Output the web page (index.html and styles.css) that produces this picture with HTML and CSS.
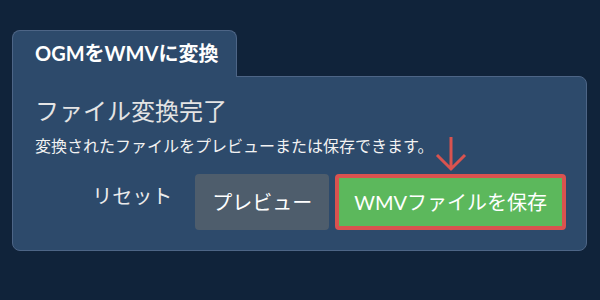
FILE: index.html
```html
<!DOCTYPE html>
<html lang="ja">
<head>
    <meta charset="UTF-8">
    <meta name="viewport" content="width=device-width, initial-scale=1.0">
    <title>OGMをWMVに変換</title>
    <link rel="stylesheet" href="styles.css">
</head>
<body>
    <div class="converter">
        <div class="tab">OGMをWMVに変換</div>
        <div class="panel">
            <h2 class="panel-title">ファイル変換完了</h2>
            <p class="panel-text">変換されたファイルをプレビューまたは保存できます。</p>
            <div class="actions">
                <button class="btn btn-link">リセット</button>
                <button class="btn btn-secondary">プレビュー</button>
                <div class="save-wrap">
                    <svg class="hint-arrow" width="32" height="36" viewBox="0 0 32 36">
                        <path d="M16 1 V33 M2 19 L16 33 L30 19" fill="none" stroke="#d9534f" stroke-width="3" />
                    </svg>
                    <button class="btn btn-success">WMVファイルを保存</button>
                </div>
            </div>
        </div>
    </div>
</body>
</html>
```

FILE: styles.css
```css
body {
    margin: 0;
    background-color: #10233a;
    font-family: Lato, "Noto Sans CJK JP", sans-serif;
    color: #ebebeb;
}
.converter {
    width: 575px;
    padding: 30px 0 0 12px;
}
.tab {
    position: relative;
    z-index: 1;
    display: inline-block;
    box-sizing: border-box;
    height: 47px;
    margin-bottom: -1px;
    padding: 0 18px 0 22px;
    background-color: #2d4a6b;
    border: 1px solid #4d6586;
    border-bottom: none;
    border-radius: 8px 8px 0 0;
    color: #fff;
    font-size: 20px;
    font-weight: bold;
    line-height: 45px;
}
.panel {
    box-sizing: border-box;
    height: 175px;
    padding: 18px 20px 0 22px;
    background-color: #2d4a6b;
    border: 1px solid #4d6586;
    border-radius: 0 8px 8px 8px;
}
.panel-title {
    margin: 0;
    font-size: 24px;
    font-weight: normal;
    line-height: 32px;
    color: #e4e4e4;
}
.panel-text {
    margin: 7px 0 0;
    font-size: 16px;
    line-height: 24px;
    color: #f2f2f2;
}
.actions {
    display: flex;
    justify-content: flex-end;
    align-items: center;
    gap: 6px;
    margin-top: 16px;
}
.btn {
    padding: 14px 17px;
    border: none;
    border-radius: 4px;
    font-family: Lato, "Noto Sans CJK JP", sans-serif;
    font-size: 20px;
    line-height: 28px;
    color: #fff;
    cursor: pointer;
}
.btn-link {
    background: none;
    color: #ebebeb;
    padding-bottom: 20px;
    padding-top: 8px;
}
.btn-secondary {
    background-color: #4e5d6c;
}
.save-wrap {
    position: relative;
}
.btn-success {
    display: block;
    padding: 10px 15px;
    background-color: #5cb85c;
    border: 4px solid #d9534f;
}
.hint-arrow {
    position: absolute;
    left: 50%;
    bottom: 100%;
    margin-left: -16px;
    margin-bottom: 2px;
}
```
